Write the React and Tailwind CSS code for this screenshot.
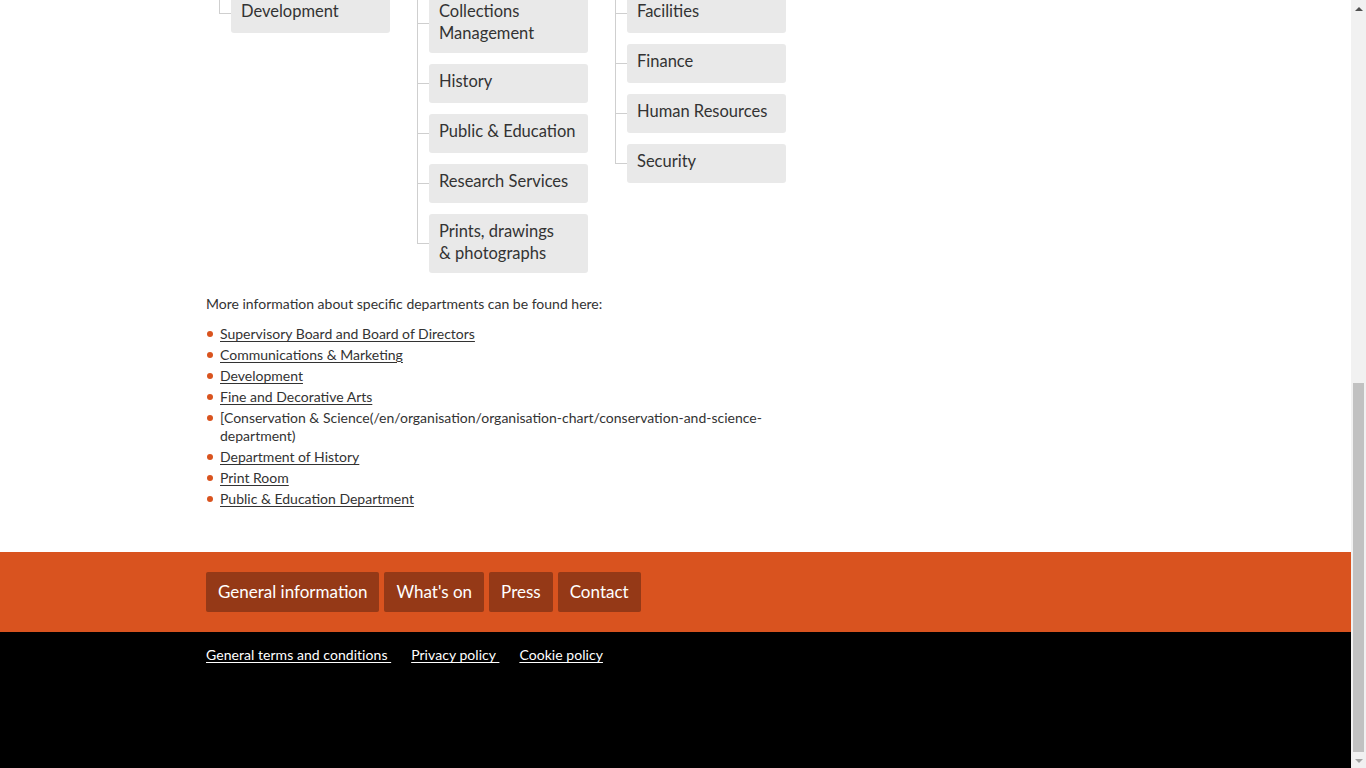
import React from "react";

const font = { fontFamily: "Lato, 'Open Sans', sans-serif" };

function Box({ children }) {
  return (
    <div className="flex min-h-[39px] w-[159px] items-start rounded-[3px] bg-[#e9e9e9] px-[10px] pt-[7px] pb-[9px] text-[16.5px] leading-[21.5px] text-[#333]">
      <span>{children}</span>
    </div>
  );
}

function Column({ items }) {
  return (
    <div className="flex flex-col">
      {items.map((it, i) => {
        const last = i === items.length - 1;
        return (
          <React.Fragment key={i}>
            {i > 0 && <div className="h-[11px] w-[12px] border-l border-[#cfcfcf]" />}
            <div className="flex">
              <div className="flex w-[12px] flex-col">
                <div className="flex-1 border-b border-l border-[#cfcfcf]" />
                <div className={"flex-1 " + (last ? "" : "border-l border-[#cfcfcf]")} />
              </div>
              <Box>{it}</Box>
            </div>
          </React.Fragment>
        );
      })}
    </div>
  );
}

const links = [
  "Supervisory Board and Board of Directors",
  "Communications & Marketing",
  "Development",
  "Fine and Decorative Arts",
  null,
  "Department of History",
  "Print Room",
  "Public & Education Department",
];

function Scrollbar() {
  return (
    <div className="flex h-[768px] w-[15px] shrink-0 flex-col bg-[#f1f1f1]">
      <div className="flex h-[17px] items-center justify-center">
        <div className="h-0 w-0 border-x-[4px] border-b-[4px] border-x-transparent border-b-[#505050]" />
      </div>
      <div className="flex-1 pt-[366px] pb-[2px] px-[2px]">
        <div className="h-full w-full bg-[#c1c1c1]" />
      </div>
      <div className="flex h-[14px] items-center justify-center">
        <div className="h-0 w-0 border-x-[4px] border-t-[4px] border-x-transparent border-t-[#a3a3a3]" />
      </div>
    </div>
  );
}

export default function App() {
  return (
    <div className="flex h-[768px] w-[1366px] overflow-hidden bg-white" style={font}>
      <div className="flex flex-1 flex-col">
        <main className="mx-auto w-[939px]">
          <div className="-mt-[6px] grid grid-cols-[198px_198px_198px] pl-[13px]">
            <Column items={["Development"]} />
            <Column
              items={[
                <>Collections<br />Management</>,
                "History",
                "Public & Education",
                "Research Services",
                <>Prints, drawings<br />&amp; photographs</>,
              ]}
            />
            <Column items={["Facilities", "Finance", "Human Resources", "Security"]} />
          </div>
          <div className="w-[580px] pt-[20px] pb-[44px] text-[14px] text-[#333]">
            <p className="leading-[21px]">More information about specific departments can be found here:</p>
            <ul className="mt-[11px] flex flex-col gap-[3px]">
              {links.map((l, i) => (
                <li key={i} className="flex leading-[18px]">
                  <span className="flex h-[18px] w-[14px] shrink-0 items-center">
                    <span className="ml-[1px] h-[6px] w-[6px] rounded-full bg-[#d9531e]" />
                  </span>
                  {l ? (
                    <a href="#" className="underline underline-offset-2">{l}</a>
                  ) : (
                    <span>[Conservation &amp; Science(/en/organisation/organisation-chart/conservation-and-science-department)</span>
                  )}
                </li>
              ))}
            </ul>
          </div>
        </main>
        <footer className="bg-[#d9531f]">
          <div className="mx-auto flex w-[939px] gap-[5px] py-[20px]">
            {["General information", "What's on", "Press", "Contact"].map((t) => (
              <a key={t} href="#" className="flex h-[40px] items-center rounded-[2px] bg-[#953917] px-[12px] text-[17px] text-white">
                {t}
              </a>
            ))}
          </div>
        </footer>
        <div className="flex-1 bg-black">
          <div className="mx-auto flex w-[939px] gap-[20px] pt-[14px] text-[14px] leading-[18px] tracking-[0.05px] text-white">
            <a href="#" className="underline underline-offset-2">General terms and conditions&nbsp;</a>
            <a href="#" className="underline underline-offset-2">Privacy policy&nbsp;</a>
            <a href="#" className="underline underline-offset-2">Cookie policy</a>
          </div>
        </div>
      </div>
      <Scrollbar />
    </div>
  );
}
